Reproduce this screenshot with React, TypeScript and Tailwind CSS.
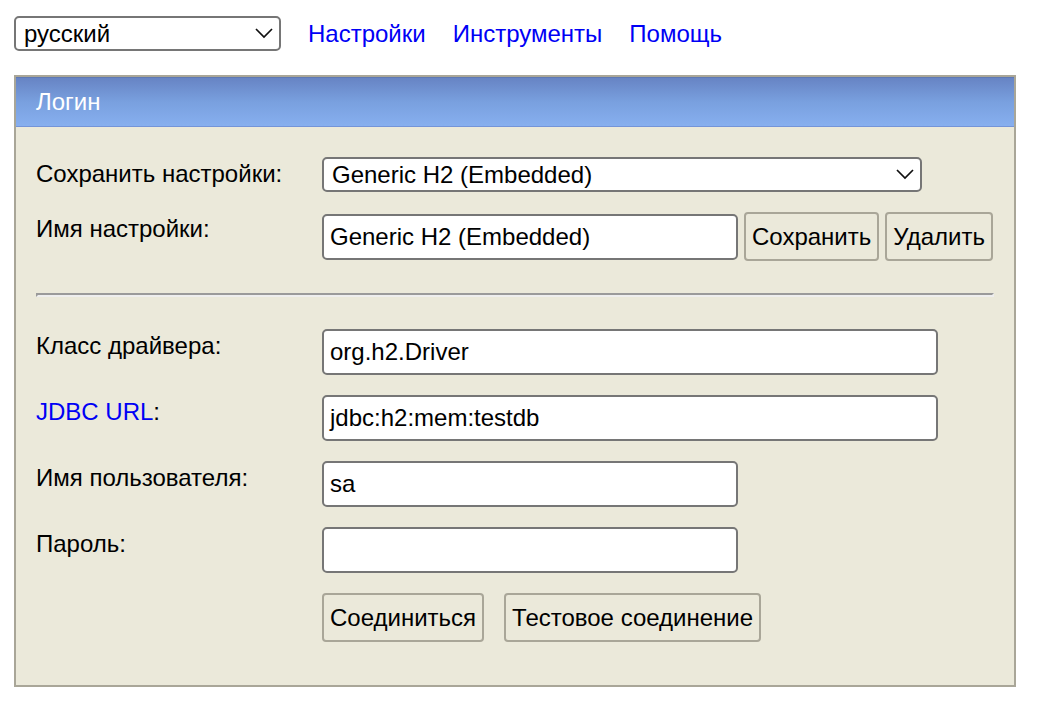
import type { ReactNode } from "react";

const fieldClass =
  "h-[46px] w-full min-w-0 rounded-[5px] border-2 border-[#767676] bg-white px-1 indent-0.5 text-black";
const buttonClass =
  "h-[49px] shrink-0 cursor-pointer rounded-[4px] border-2 border-[#a9a698] bg-[#ebe9da] px-1.5 text-black";

function Select({ id, label, options }: { id: string; label?: string; options: string[] }) {
  return (
    <div className="relative w-full">
      <select
        id={id}
        aria-label={label}
        className="block h-[35px] w-full appearance-none rounded-[5px] border-2 border-[#767676] bg-white pr-9 pl-2 leading-[28px] text-black"
      >
        {options.map((option) => (
          <option key={option}>{option}</option>
        ))}
      </select>
      <svg
        aria-hidden="true"
        viewBox="0 0 18 11"
        className="pointer-events-none absolute top-3 right-2 h-[11px] w-[18px] fill-none stroke-[#101010]"
      >
        <path d="M1 1l8 8 8-8" strokeWidth="1.7" />
      </svg>
    </div>
  );
}

function Row({ id, label, children }: { id: string; label: ReactNode; children: ReactNode }) {
  return (
    <div className="grid grid-cols-[266px_minmax(0,1fr)] gap-x-5">
      <label htmlFor={id} className="leading-[34px]">
        {label}
      </label>
      {children}
    </div>
  );
}

export default function App() {
  return (
    <div className="bg-white py-4 pr-[42px] pl-3.5 font-['Liberation_Sans',Arial,sans-serif] text-[24px] leading-[28px] text-black">
      <nav className="flex items-center gap-[27px] text-[#0000f5]">
        <div className="w-[267px]">
          <Select id="language" label="Язык" options={["русский"]} />
        </div>
        <a href="#settings">Настройки</a>
        <a href="#tools">Инструменты</a>
        <a href="#help">Помощь</a>
      </nav>

      <form
        className="mt-6 border-2 border-[#a9a698] bg-[#ebe9da]"
        onSubmit={(event) => event.preventDefault()}
      >
        <h1 className="h-[50px] border-t border-b border-t-[#5f79b4] border-b-[#7494d8] bg-linear-to-b from-[#6784c4] via-[#79a0df] to-[#87afef] px-5 leading-[48px] text-white">
          Логин
        </h1>

        <div className="px-5 pt-[30px] pb-[43px]">
          <div className="flex flex-col gap-5">
            <Row id="saved" label="Сохранить настройки:">
              <div className="max-w-[600px]">
                <Select id="saved" options={["Generic H2 (Embedded)"]} />
              </div>
            </Row>
            <Row id="name" label="Имя настройки:">
              <div className="flex items-center gap-1.5">
                <input id="name" className={`${fieldClass} max-w-[416px]`} defaultValue="Generic H2 (Embedded)" />
                <button type="button" className={buttonClass}>Сохранить</button>
                <button type="button" className={buttonClass}>Удалить</button>
              </div>
            </Row>
          </div>

          <hr className="my-8 border-2 border-t-[#9a9a9a] border-r-[#eeeeee] border-b-[#eeeeee] border-l-[#9a9a9a]" />

          <div className="flex flex-col gap-5">
            <Row id="driver" label="Класс драйвера:">
              <input id="driver" className={`${fieldClass} max-w-[616px]`} defaultValue="org.h2.Driver" />
            </Row>
            <Row
              id="url"
              label={
                <>
                  <a href="#url-help" className="text-[#0000f5]">JDBC URL</a>:
                </>
              }
            >
              <input id="url" className={`${fieldClass} max-w-[616px]`} defaultValue="jdbc:h2:mem:testdb" />
            </Row>
            <Row id="user" label="Имя пользователя:">
              <input id="user" className={`${fieldClass} max-w-[416px]`} defaultValue="sa" />
            </Row>
            <Row id="password" label="Пароль:">
              <input id="password" type="password" className={`${fieldClass} max-w-[416px]`} />
            </Row>
            <div className="flex gap-5 pl-[286px]">
              <button type="submit" className={buttonClass}>Соединиться</button>
              <button type="button" className={buttonClass}>Тестовое соединение</button>
            </div>
          </div>
        </div>
      </form>
    </div>
  );
}
